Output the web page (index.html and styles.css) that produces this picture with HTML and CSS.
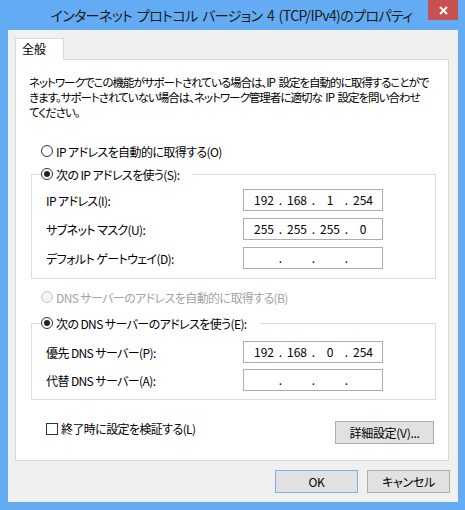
FILE: index.html
```html
<!DOCTYPE html>
<html lang="ja">
<head>
<meta charset="utf-8">
<title>インターネット プロトコル バージョン 4 (TCP/IPv4)のプロパティ</title>
<link rel="stylesheet" href="styles.css">
</head>
<body>
<div class="window">
  <div class="titlebar">
    <span class="title">インターネット プロトコル バージョン 4 (TCP/IPv4)のプロパティ</span>
    <span class="close" aria-label="閉じる">
      <svg width="9" height="9" viewBox="0 0 9 9"><path d="M1 1 L8 8 M8 1 L1 8" stroke="#fff" stroke-width="2" fill="none"/></svg>
    </span>
  </div>
  <div class="client">
    <div class="tabs"><div class="tab">全般</div></div>
    <div class="panel">
      <p class="intro">ネットワークでこの機能がサポートされている場合は、IP 設定を自動的に取得することがで<br>きます。サポートされていない場合は、ネットワーク管理者に適切な IP 設定を問い合わせ<br>てください。</p>

      <div class="radio-row"><span class="radio"></span><span>IP アドレスを自動的に取得する(O)</span></div>

      <div class="group group-ip">
        <div class="group-head"><span class="radio checked"></span><span>次の IP アドレスを使う(S):</span></div>
        <div class="fields">
          <span class="label">IP アドレス(I):</span>
          <div class="ip-box"><span>192</span><i>.</i><span>168</span><i>.</i><span>1</span><i>.</i><span>254</span></div>
          <span class="label">サブネット マスク(U):</span>
          <div class="ip-box"><span>255</span><i>.</i><span>255</span><i>.</i><span>255</span><i>.</i><span>0</span></div>
          <span class="label">デフォルト ゲートウェイ(D):</span>
          <div class="ip-box"><span></span><i>.</i><span></span><i>.</i><span></span><i>.</i><span></span></div>
        </div>
      </div>

      <div class="radio-row disabled dns-auto"><span class="radio"></span><span>DNS サーバーのアドレスを自動的に取得する(B)</span></div>

      <div class="group group-dns">
        <div class="group-head"><span class="radio checked"></span><span>次の DNS サーバーのアドレスを使う(E):</span></div>
        <div class="fields">
          <span class="label">優先 DNS サーバー(P):</span>
          <div class="ip-box"><span>192</span><i>.</i><span>168</span><i>.</i><span>0</span><i>.</i><span>254</span></div>
          <span class="label">代替 DNS サーバー(A):</span>
          <div class="ip-box"><span></span><i>.</i><span></span><i>.</i><span></span><i>.</i><span></span></div>
        </div>
      </div>

      <div class="footer">
        <div class="check-row"><span class="checkbox"></span><span>終了時に設定を検証する(L)</span></div>
        <button class="btn btn-advanced">詳細設定(V)...</button>
      </div>
    </div>
    <div class="dialog-buttons">
      <button class="btn btn-default">OK</button>
      <button class="btn">キャンセル</button>
    </div>
  </div>
</div>
</body>
</html>
```
FILE: styles.css
```css
* { box-sizing: border-box; }

html, body {
  margin: 0;
  padding: 0;
}

body {
  width: 465px;
  height: 510px;
  overflow: hidden;
  font-family: "Noto Sans CJK JP", "Noto Sans", sans-serif;
  font-size: 12px;
  letter-spacing: -0.6px;
  color: #000;
  font-feature-settings: "palt";
}

/* window frame */
.window {
  position: relative;
  width: 465px;
  height: 510px;
  background: #63acf3;
  padding: 0 7px 8px 8px;
  display: flex;
  flex-direction: column;
}

.titlebar {
  height: 30px;
  display: flex;
  align-items: center;
  justify-content: center;
}

.title {
  font-size: 14px;
  letter-spacing: -0.6px;
  word-spacing: 2px;
  color: #1b1b1b;
  margin-right: 3px;
  white-space: nowrap;
}

.close {
  position: absolute;
  top: 0;
  right: 7px;
  width: 30px;
  height: 20px;
  background: #c75050;
  display: flex;
  align-items: center;
  justify-content: center;
}

/* client area */
.client {
  flex: 1;
  background: #f0f0f0;
  padding: 8px 8px 0 7px;
  display: flex;
  flex-direction: column;
}

.tabs {
  display: flex;
  height: 21px;
}

.tab {
  position: relative;
  z-index: 1;
  width: 49px;
  height: 22px;
  background: #fff;
  border: 1px solid #d9d9d9;
  border-bottom: none;
  padding-left: 6px;
  line-height: 20px;
  letter-spacing: 0;
}

.panel {
  width: 434px;
  height: 402px;
  background: #fff;
  border: 1px solid #d9d9d9;
  padding: 0 0 0 15px;
}

.intro {
  margin: 15px 0 0 -2px;
  font-size: 11.5px;
  letter-spacing: -1px;
  word-spacing: 2px;
  line-height: 15px;
  white-space: nowrap;
}

/* radio buttons */
.radio-row {
  display: flex;
  align-items: center;
  height: 16px;
  margin: 23px 0 0 10px;
  gap: 3px;
  white-space: nowrap;
}

.radio {
  flex: none;
  width: 12px;
  height: 12px;
  border: 1px solid #333;
  border-radius: 50%;
  background: #fff;
  display: flex;
  align-items: center;
  justify-content: center;
}

.radio.checked::after {
  content: "";
  width: 6px;
  height: 6px;
  border-radius: 50%;
  background: #222;
}

.radio-row.disabled { color: #a3a3a3; }
.radio-row.disabled .radio { border-color: #c4c4c4; background: #f4f4f4; }

.dns-auto { margin-top: 10px; }

/* group boxes */
.group {
  width: 405px;
  border: 1px solid #dcdcdc;
  padding: 0 0 9px 14px;
}

.group-ip { margin-top: 15px; }
.group-dns { margin-top: 18px; padding-bottom: 8px; }

.group-head {
  display: flex;
  align-items: center;
  gap: 3px;
  width: max-content;
  height: 16px;
  margin: -9px 0 0 -5px;
  padding: 0 12px 0 0;
  background: #fff;
  white-space: nowrap;
}

.fields {
  display: grid;
  grid-template-columns: 197px 140px;
  row-gap: 7px;
  margin-top: 7px;
  align-items: center;
}

.group-dns .fields { margin-top: 10px; row-gap: 6px; }

.label { white-space: nowrap; }

.ip-box {
  height: 22px;
  border: 1px solid #abadb3;
  background: #fff;
  padding-left: 8px;
  display: grid;
  grid-template-columns: 24px 9px 24px 9px 24px 9px 24px;
  align-items: center;
  text-align: center;
  line-height: 20px;
  letter-spacing: 0;
}

.ip-box i { font-style: normal; }

/* footer of the tab page */
.footer {
  display: flex;
  justify-content: space-between;
  align-items: flex-start;
  margin-top: 21px;
  padding: 0 14px 0 15px;
}

.check-row {
  display: flex;
  align-items: center;
  gap: 3px;
  height: 13px;
  margin-top: 1px;
  white-space: nowrap;
}

.checkbox {
  width: 12px;
  height: 12px;
  border: 1px solid #333;
  background: #fff;
}

/* buttons */
.btn {
  height: 23px;
  width: 83px;
  padding: 0;
  background: #e1e1e1;
  border: 1px solid #adadad;
  font-family: inherit;
  font-size: 12px;
  letter-spacing: -0.3px;
  color: #000;
  font-feature-settings: "palt";
}

.btn-advanced { width: 99px; }

.btn-default { border-color: #78b2ec; }

.dialog-buttons {
  display: flex;
  justify-content: flex-end;
  gap: 9px;
  margin-top: 9px;
}
```
